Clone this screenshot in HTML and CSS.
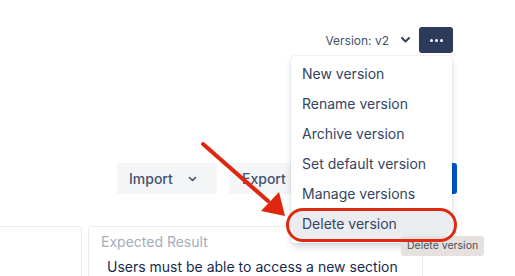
FILE: index.html
```html
<!DOCTYPE html>
<html lang="en">
<head>
    <meta charset="UTF-8">
    <meta name="viewport" content="width=device-width, initial-scale=1.0">
    <title>Test case - Versions</title>
    <link rel="stylesheet" href="styles.css">
</head>
<body>
    <div class="page">
        <div class="topbar">
            <button class="version-select">
                Version: v2
                <svg class="chevron" width="9" height="6" viewBox="0 0 9 6"><path d="M1 1l3.5 3.5L8 1" fill="none" stroke="#344563" stroke-width="2" stroke-linecap="round" stroke-linejoin="round"/></svg>
            </button>
            <button class="more-btn" aria-label="More">
                <span class="dot"></span><span class="dot"></span><span class="dot"></span>
            </button>
        </div>

        <div class="toolbar">
            <button class="btn btn-import">
                Import
                <svg class="chevron" width="9" height="6" viewBox="0 0 9 6"><path d="M1.5 1.5l3 3 3-3" fill="none" stroke="#42526e" stroke-width="1.6" stroke-linecap="round" stroke-linejoin="round"/></svg>
            </button>
            <button class="btn btn-export">Export</button>
            <button class="btn btn-primary" aria-label="Save"></button>
        </div>

        <div class="cards">
            <div class="card card-left"></div>
            <div class="card">
                <div class="card-label">Expected Result</div>
                <p class="card-text">Users must be able to access a new section</p>
            </div>
        </div>

        <div class="dropdown">
            <div class="menu-item">New version</div>
            <div class="menu-item">Rename version</div>
            <div class="menu-item">Archive version</div>
            <div class="menu-item">Set default version</div>
            <div class="menu-item">Manage versions</div>
            <div class="menu-item is-active">Delete version</div>
        </div>

        <div class="tooltip">Delete version</div>
        <div class="highlight-ring"></div>

        <svg class="arrow" width="515" height="276" viewBox="0 0 515 276">
            <line x1="203" y1="144" x2="268" y2="201" stroke="#e0260f" stroke-width="4" stroke-linecap="round"/>
            <polygon points="285,216 261,211 279,192" fill="#e0260f"/>
        </svg>
    </div>
</body>
</html>
```

FILE: styles.css
```css
body {
    margin: 0;
    background: #fff;
    font-family: Inter, 'Noto Sans', sans-serif;
    color: #172b4d;
}

.page {
    position: relative;
    width: 515px;
    height: 276px;
    overflow: hidden;
    padding-top: 27px;
    box-sizing: border-box;
}

button {
    font-family: inherit;
    border: none;
    cursor: pointer;
}

.topbar {
    display: flex;
    justify-content: flex-end;
    align-items: center;
    padding-right: 62px;
    height: 26px;
}

.version-select {
    display: flex;
    align-items: center;
    gap: 12px;
    background: none;
    padding: 0;
    margin-right: 9px;
    font-size: 12px;
    color: #42526e;
}

.more-btn {
    width: 34px;
    height: 26px;
    border-radius: 3px;
    background: #2c3b5a;
    display: flex;
    align-items: center;
    justify-content: center;
    gap: 2px;
    padding: 0;
}

.dot {
    width: 3px;
    height: 3px;
    border-radius: 50%;
    background: #fff;
}

.toolbar {
    display: flex;
    justify-content: flex-end;
    gap: 12px;
    margin-top: 110px;
    padding-right: 58px;
}

.btn {
    height: 31px;
    border-radius: 3px;
    background: #f4f5f7;
    color: #42526e;
    font-size: 14px;
    font-weight: 500;
    display: flex;
    align-items: center;
    padding: 0 12px;
    box-sizing: border-box;
}

.btn-import {
    width: 100px;
    justify-content: space-between;
    padding-right: 20px;
}

.btn-export {
    width: 100px;
    padding-left: 13px;
}

.btn-primary {
    width: 116px;
    background: #0052cc;
}

.cards {
    display: flex;
    gap: 6px;
    margin-top: 32px;
}

.card {
    width: 335px;
    height: 60px;
    box-sizing: border-box;
    border: 1px solid #ebecf0;
    border-radius: 3px;
    padding: 5px 12px 0;
}

.card-left {
    width: 82px;
    border-left: none;
    border-radius: 0 3px 0 0;
}

.card-label {
    font-size: 14px;
    line-height: 20px;
    color: #a5adba;
}

.card-text {
    margin: 5px 0 0 6px;
    font-size: 14px;
    line-height: 20px;
    color: #172b4d;
}

.dropdown {
    position: absolute;
    left: 291px;
    top: 56px;
    width: 161px;
    padding: 3px 0 4px;
    background: #fff;
    border-radius: 3px;
    box-shadow: 0 4px 8px -2px rgba(9, 30, 66, 0.25), 0 0 1px rgba(9, 30, 66, 0.31);
    z-index: 2;
}

.menu-item {
    height: 30px;
    line-height: 30px;
    padding: 0 11px;
    font-size: 14px;
    color: #344563;
}

.menu-item.is-active {
    background: #ebecf0;
    border-radius: 14px;
}

.tooltip {
    position: absolute;
    left: 401px;
    top: 236px;
    height: 20px;
    line-height: 20px;
    padding: 0 6px;
    white-space: nowrap;
    background: #e6e0de;
    border-radius: 3px;
    font-size: 10.5px;
    color: #4a4f57;
    z-index: 3;
}

.highlight-ring {
    position: absolute;
    left: 286px;
    top: 208px;
    width: 171px;
    height: 34px;
    box-sizing: border-box;
    border: 3px solid #de2a10;
    border-radius: 17px;
    z-index: 4;
}

.arrow {
    position: absolute;
    left: 0;
    top: 0;
    z-index: 5;
}
```
